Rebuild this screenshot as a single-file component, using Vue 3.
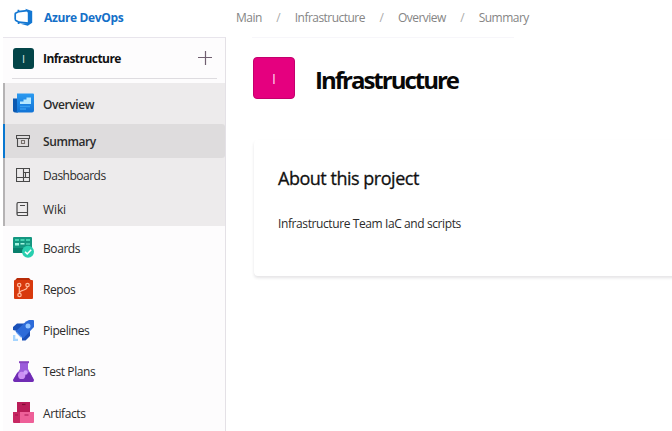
<script setup>
const subItems = [
  { id: 'summary', label: 'Summary', active: true },
  { id: 'dashboards', label: 'Dashboards' },
  { id: 'wiki', label: 'Wiki' },
]
const services = [
  { id: 'boards', label: 'Boards' },
  { id: 'repos', label: 'Repos' },
  { id: 'pipelines', label: 'Pipelines' },
  { id: 'tests', label: 'Test Plans' },
  { id: 'artifacts', label: 'Artifacts' },
]
const crumbs = ['Main', 'Infrastructure', 'Overview', 'Summary']
</script>

<template>
  <div class="page">
    <header class="topbar">
      <div class="brand">
        <svg class="logo" viewBox="0 0 19 19">
          <path d="M1.2 5.2v6.6M1 5.4 4.8 3.6 13 2.6M4.4 1.8v2.400M1 12l4 2.2 9.5 .8M4.6 14v2" fill="none" stroke="#1377d2" stroke-width="1.7" />
          <path d="M11.2.8 18.2 3v11.8l-4.4 3-7.5-2 7.500-.9V4.7z" fill="#1377d2" />
        </svg>
        <span class="brand-name">Azure DevOps</span>
      </div>
      <nav class="crumbs">
        <template v-for="(crumb, i) in crumbs" :key="crumb">
          <span v-if="i" class="slash">/</span>
          <span class="crumb">{{ crumb }}</span>
        </template>
      </nav>
    </header>

    <div class="body">
      <aside class="sidebar">
        <div class="project">
          <span class="badge">I</span>
          <span class="project-name">Infrastructure</span>
          <svg class="plus" viewBox="0 0 14 14"><path d="M7.5 0v14M0 6.5h14" stroke="#705f70" stroke-width="1.2" /></svg>
        </div>

        <div class="group">
          <a class="item overview">
            <svg class="icon" viewBox="0 0 21 20">
              <defs>
                <linearGradient id="ov" x1="0" y1="0" x2="0" y2="1"><stop offset="0" stop-color="#2b9af0" /><stop offset="1" stop-color="#1173d6" /></linearGradient>
              </defs>
              <path d="M0 5h5v14H2a2 2 0 0 1-2-2z" fill="#0c59b0" />
              <path d="M4 0h16a1 1 0 0 1 1 1v16a2 2 0 0 1-2 2H2.5Q4 19 4 17z" fill="url(#ov)" />
              <path d="M7 10.500V8h3.500V6h3V4H18v6.500z" fill="#b5e8ff" />
              <path d="M7 13h10M7 15.500h6" stroke="#369ff0" stroke-width="1.3" />
            </svg>
            <span class="label">Overview</span>
          </a>
          <a v-for="s in subItems" :key="s.id" :class="['item', 'sub', s.id, { active: s.active }]">
            <svg v-if="s.id === 'summary'" class="icon small" viewBox="0 0 14 14">
              <g fill="none" stroke="#4b4b4b" stroke-width="1.1"><path d="M.5 1.5h13v3H.5zM1.500 4.500v8h11v-8" /><path d="M5.500 6.500h3v3h-3z" stroke="#77706c" /></g>
            </svg>
            <svg v-else-if="s.id === 'dashboards'" class="icon small" viewBox="0 0 14 14">
              <path d="M.5.5h13v13H.5zM7.500.5v13M.5 9.500h7M7.500 4.500h6M7.500 9.500h6M9.500 4.500v5" fill="none" stroke="#494949" stroke-width="1.1" />
            </svg>
            <svg v-else class="icon small" viewBox="0 0 14 14">
              <path d="M2.500.5h9v13h-9A1.500 1.500 0 0 1 1 12V2A1.500 1.500 0 0 1 2.500.5zM1 12q0-1.500 1.500-1.500h9M4 3.500h5" fill="none" stroke="#494949" stroke-width="1.2" />
            </svg>
            <span class="label">{{ s.label }}</span>
          </a>
        </div>

        <div class="services">
          <a v-for="s in services" :key="s.id" :class="['item', s.id]">
            <svg v-if="s.id === 'boards'" class="icon" viewBox="0 0 21 21">
              <path d="M0 1a1 1 0 0 1 1-1h17a1 1 0 0 1 1 1v15H1a1 1 0 0 1-1-1z" fill="#149680" />
              <path d="M0 11h19v5H1a1 1 0 0 1-1-1z" fill="#087f6c" />
              <path d="M2 2h4v2H2zM7.500 2h4v2h-4zM13 2h4v2h-4z" fill="#45d2b1" />
              <path d="M2 6h4v2.500H2zM7.500 6h4v1.500h-4z" fill="#a4f5e2" />
              <path d="M13 6h4v2h-4z" fill="#3fc3a7" />
              <circle cx="15" cy="14.700" r="6" fill="#28cfaf" />
              <path d="m12 14.700 2.200 2.200 4-4.200" fill="none" stroke="#fff" stroke-width="1.500" />
            </svg>
            <svg v-else-if="s.id === 'repos'" class="icon" viewBox="0 0 21 21">
              <path d="m4 0h12l2 2.300H2z" fill="#b72b08" />
              <path d="M2 2h17a1 1 0 0 1 1 1v17a1 1 0 0 1-1 1H2a1 1 0 0 1-1-1V3a1 1 0 0 1 1-1z" fill="#d8390d" />
              <g fill="none" stroke="#ffbc9f" stroke-width="1.200"><circle cx="6.200" cy="7" r="1.700" /><circle cx="14.500" cy="7" r="1.700" /><circle cx="6.500" cy="17" r="1.700" /><path d="M6.300 8.800v6.500M6.500 15c.5-4 7.500-1.500 7.800-6.200" /></g>
            </svg>
            <svg v-else-if="s.id === 'pipelines'" class="icon" viewBox="0 0 21 21">
              <path d="M0 10V7l4-3.500h8l-6 8zM9 15.500l8-6V16l-4.500 4.500H9z" fill="#1a50b8" />
              <path d="M13 1.500 16 0h4a1 1 0 0 1 1 1v6L10 18.500 2.500 11.400z" fill="#2d6bd9" />
              <circle cx="15" cy="6" r="2.500" fill="#93c4ff" />
              <path d="m3.500 12.400 5 5" stroke="#6ba3f5" stroke-width="1.300" />
              <path d="M0 15h2.300v3.700H5V21H0z" fill="#a6d5ff" />
            </svg>
            <svg v-else-if="s.id === 'tests'" class="icon" viewBox="0 0 21 21">
              <path d="M7 1h8v7l5.700 10.500q.4 2.500-2 2.500H2Q-.1 21 .3 18.500L7 8z" fill="#9b5cda" />
              <path d="M4.300 11.500h12.700l3.700 7q.4 2.500-2 2.500H2Q-.1 21 .3 18.500z" fill="#702cb4" />
              <path d="M6 .2h10v2H6z" fill="#8744bf" />
              <circle cx="8.700" cy="14.400" r="3.600" fill="#cc8ff3" /><circle cx="12.600" cy="11.500" r="2.200" fill="#cda0f8" />
            </svg>
            <svg v-else class="icon" viewBox="0 0 21 21">
              <path d="M4 0h13v10.500H4z" fill="#b91c58" /><path d="M9 2.500h3.500" stroke="#810c32" stroke-width="1.200" />
              <path d="M0 10h8v11H1a1 1 0 0 1-1-1z" fill="#c72862" />
              <path d="M7 10h14v10a1 1 0 0 1-1 1H7z" fill="#ee5f98" />
              <path d="M11.500 13h4" stroke="#b82862" stroke-width="1.300" /><path d="M2 13h3" stroke="#a31b4e" stroke-width="1.200" />
            </svg>
            <span class="label">{{ s.label }}</span>
          </a>
        </div>
      </aside>

      <main class="content">
        <div class="heading">
          <span class="avatar">I</span>
          <h1>Infrastructure</h1>
        </div>
        <section class="card">
          <h2>About this project</h2>
          <p>Infrastructure Team IaC and scripts</p>
        </section>
      </main>
    </div>
  </div>
</template>

<style>
body { background: #fff; overflow: hidden; }
</style>

<style scoped>
.page { width: 672px; height: 431px; overflow: hidden; font-family: "Open Sans", sans-serif; font-size: 12px; color: #2b2b2b; display: flex; flex-direction: column; background: #fff; }
.page * { box-sizing: border-box; }
.page span, h1, h2, p { white-space: nowrap; }
.topbar { height: 37px; flex: none; display: flex; align-items: center; padding-bottom: 2px; }
.brand { width: 236px; flex: none; display: flex; align-items: center; padding-left: 14px; }
.logo { width: 19px; height: 19px; margin-right: 11px; }
.brand-name { color: #1470c8; font-weight: 700; letter-spacing: -.35px; }
.crumbs { display: flex; align-items: center; color: #858585; font-weight: 400; letter-spacing: -.53px; }
.slash { width: 33px; text-align: center; color: #aaa; }
.body { flex: 1; display: flex; min-height: 0; }
.sidebar { width: 223px; margin-left: 3px; flex: none; background: #fdfcfd; border-top: 1px solid #e8e5ec; border-right: 1px solid #e4e1e6; }
.project { height: 41px; margin: 0 8px 4px 9px; padding: 0 5px 0 1px; border-bottom: 1px solid #dedce0; display: flex; align-items: center; }
.badge { width: 21px; height: 21px; border-radius: 3px; background: #034448; color: #d8e4e4; font-size: 11px; display: flex; align-items: center; justify-content: center; margin-right: 9px; }
.project-name { flex: 1; font-weight: 700; color: #111; letter-spacing: -.55px; }
.plus { width: 14px; height: 14px; }
.group { background: #edebec; }
.item { display: flex; align-items: center; height: 41.25px; padding-left: 10px; }
.group .item { border-left: 2px solid #b5b3b4; padding-left: 8px; height: 34px; }
.group .overview { height: 41px; }
.group .item.active { background: #dedcdd; border-left-color: #0877d0; border-radius: 0 3px 3px 0; }
.services { padding-top: 1px; }
.icon { width: 21px; height: 21px; flex: none; margin-right: 9px; }
.icon.small { width: 14px; height: 14px; margin: 0 14px 0 3px; }
.label { letter-spacing: -.42px; padding-top: 1px; }
.sub .label { margin-left: -1px; }
.dashboards .label { letter-spacing: -.5px; }
.wiki .label { letter-spacing: -.1px; }
.overview .label, .active .label { font-weight: 600; letter-spacing: -.4px; }
.heading { display: flex; align-items: center; height: 42px; }
.content { flex: 1; padding: 19px 0 0 27px; }
.content::before { content: ""; display: block; width: 262px; height: 1px; margin-left: -1px; margin-top: -19px; margin-bottom: 19px; background: #f7f6fa; }
.avatar { width: 42px; height: 42px; background: #e5007f; border: 1px solid #c4006d; border-radius: 4px; display: flex; align-items: center; justify-content: center; color: #ffd5eb; font-size: 14px; margin-right: 20px; }
h1 { margin: 4px 0 0; font-size: 24px; line-height: 32px; font-weight: 700; letter-spacing: -2px; color: #080808; }
.card { margin: 41px -10px 0 1px; height: 136px; padding: 26px 24px 0; border-radius: 4px; box-shadow: 0 2px 3px rgba(40,30,50,.12); }
h2 { margin: 0; font-size: 18px; line-height: 25px; font-weight: 500; letter-spacing: -.48px; color: #111; -webkit-text-stroke: .3px #111; }
p { margin: 24px 0 0; line-height: 18px; font-size: 12px; letter-spacing: -.4px; }
</style>
